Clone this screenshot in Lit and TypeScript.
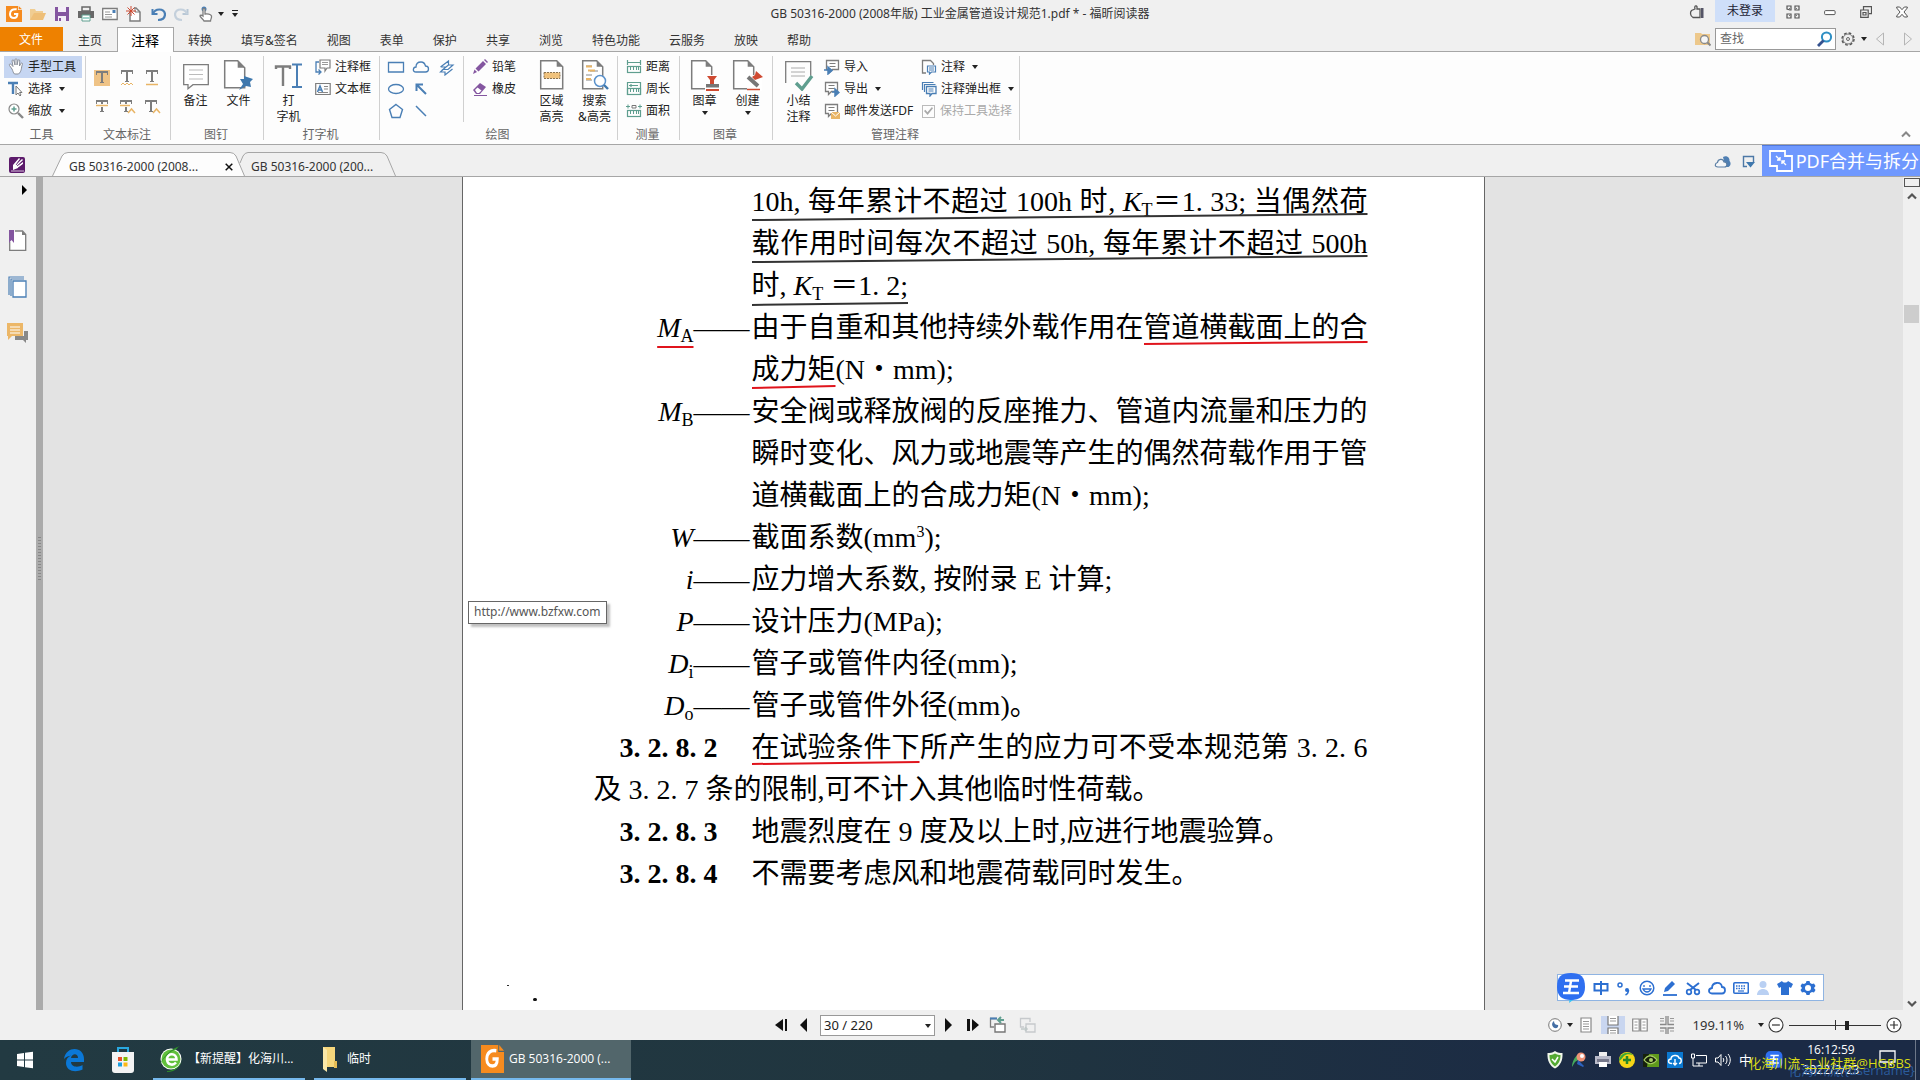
import { LitElement, html, css, svg, nothing, TemplateResult } from "lit";
import { customElement } from "lit/decorators.js";
import { classMap } from "lit/directives/class-map.js";

type Art = ReturnType<typeof svg>;

/* One drawing surface per icon; the view box is in the icon's own pixels. */
const ic = (w: number, h: number, art: Art) =>
  html`<svg class="ic" width=${w} height=${h} viewBox="0 0 ${w} ${h}" fill="none" aria-hidden="true">${art}</svg>`;

const caret = () => ic(6, 4, svg`<path d="M0 0h6L3 4z" fill="#222"/>`);

const G = "#7d7d7d";
const B = "#4a7fb5";
const T = "#5f9e8f";
const P = "#8456a0";
const O = "#e9b566";
const R = "#cf4a32";

const folded = (x: number, y: number, w: number, h: number, c: number) => svg`
  <path d="M${x} ${y}h${w - c}l${c} ${c}v${h - c}h${-w}z" fill="#fff" stroke=${G} stroke-width="1.5"/>
  <path d="M${x + w - c} ${y}v${c}h${c}z" fill=${G}/>`;

const note = (x: number, y: number, w: number, h: number, color = G) => svg`
  <path d="M${x} ${y}h${w}v${h}h${-w / 2}l-3 3v-3h${-(w / 2 - 3)}z" fill="#fff" stroke=${color} stroke-width="1.3"/>
  <path d="M${x + 3} ${y + 3}h${w - 6}M${x + 3} ${y + 6}h${w - 6}" stroke=${color}/>`;

const tee = (x: number, y: number, color = G) => svg`<path d="M${x - 1} ${y + 1}h12M${x + 5} ${y + 1}v11" stroke=${color} stroke-width="2"/><path d="M${x - 0.5} ${y + 1}v3M${x + 10.5} ${y + 1}v3M${x + 3} ${y + 11.5}h4" stroke=${color}/>`;

const foxit = (w: number, h: number) => html`<svg class="ic" width=${w} height=${h} viewBox="0 0 24 24" preserveAspectRatio="none" fill="none" aria-hidden="true">
  <path d="M0 0h18v6h6v18H0z" fill="#f68b1f"/><path d="M19 0l5 5h-5z" fill="#f68b1f"/>
  <path d="M16 5c-6-1-10 2-10 7 0 4 3 6 6 6 4 0 5-3 5-6h-5" stroke="#fff" stroke-width="3"/></svg>`;

const ruler = (top: Art) => ic(16, 16, svg`${top}
  <rect x="1.5" y="7.5" width="13" height="6" stroke=${T} stroke-width="1.2"/><path d="M4.500 8v3M7.500 8v3M10.500 8v3M12.500 8v3" stroke=${T}/>`);

const icons: Record<string, TemplateResult> = {
  open: ic(16, 16, svg`<path d="M0 14V3h5l1 2h7v3" fill="#f0cd92"/><path d="M0 14L4 7h12l-3 7z" fill="#eebf78"/>`),
  save: ic(16, 16, svg`<path d="M1 1h14v14H1z" fill=${P}/><path d="M4 1h8v5H4zM4 10h8v5H4z" fill="#f4eef8"/><path d="M5 12h2v3H5z" fill=${P}/>`),
  print: ic(16, 16, svg`<path d="M4 1h8v4H4z" stroke="#686868" stroke-width="1.500"/><path d="M0 5h16v7H0z" fill="#686868"/><path d="M4 9h8v6H4z" fill="#fff" stroke=${T}/><path d="M5 12h6" stroke="#4a9"/>`),
  mail: ic(16, 14, svg`<path d="M.7 1.500h14.500v11H.7z" fill="#fff" stroke=${G} stroke-width="1.300"/><path d="M3 5h5M3 7.500h7M3 10h7" stroke="#999"/><path d="M10.500 3h3v3h-3z" fill=${B}/>`),
  create: ic(16, 16, svg`<path d="M4 5v10h10V6l-4-4H8" fill="#fff" stroke=${G} stroke-width="1.500"/><path d="M9 2v4h5" stroke=${G}/><path d="M5 0v10M0 5h10M1.500 1.500l7 7M8.500 1.500l-7 7" stroke=${R}/>`),
  undo: ic(16, 16, svg`<path d="M2.500 3v5h5" stroke=${B} stroke-width="2"/><path d="M3 8c2-6 11-6 12 0 0 4-3 6-7 6" stroke=${B} stroke-width="2.200"/>`),
  redo: ic(16, 16, svg`<path d="M13.500 3v5h-5" stroke="#b8c7d5" stroke-width="2"/><path d="M13 8C11 2 2 2 1 8c0 4 3 6 7 6" stroke="#c4d0dc" stroke-width="2.200"/>`),
  touch: ic(16, 16, svg`<circle cx="6" cy="3" r="2.500" fill=${B}/><path d="M5 10V3.500c0-1.500 2-1.500 2 0V8c2-.5 6 0 6.500 2 .3 2-.8 3-1 5H6c-1-2-3-3-4-5 0-1 2-1 3 0z" fill="#fff" stroke=${G} stroke-width="1.300"/>`),
  hand: ic(16, 18, svg`<path d="M4 11L1.500 7.500c-.8-1.500 1-2 2-.8L5 8.500 4 3c0-1.500 1.800-1.500 2 0l1 4V1.800c0-1.400 2-1.400 2 0V7l1-4.500c.3-1.300 2-1 1.800.5L11.500 8l1.300-2.500c.8-1 2-.4 1.600.8C13 10 14 13 10.500 16H6.500C5 14.500 5 13 4 11z" fill="#fff" stroke="#8a8f99"/>`),
  select: ic(16, 16, svg`<path d="M0 2h10M5 2v11" stroke=${B} stroke-width="2.400"/><path d="M8 5v9l2-2 2 3 1-1-1.500-2.500H14z" fill="#fff" stroke="#777"/>`),
  zoom: ic(16, 16, svg`<circle cx="6" cy="6" r="5" fill="#fff" stroke="#888" stroke-width="1.200"/><path d="M6 3.500v5M3.500 6h5" stroke=${T} stroke-width="1.500"/><path d="M10 10l5 5" stroke="#888" stroke-width="2.400"/>`),
  tHigh: ic(18, 18, svg`<path d="M1 1h16v16H1z" fill="#efc386"/>${tee(4, 2)}`),
  tWave: ic(18, 18, svg`${tee(4, 1)}<path d="M3 16l2-2 2 2 2-2 2 2 2-2 2 2" stroke=${O}/>`),
  tUnder: ic(18, 18, svg`${tee(4, 1)}<path d="M3 15.500h12" stroke=${O} stroke-width="1.500"/>`),
  tStrike: ic(18, 18, svg`${tee(4, 3)}<path d="M3 8.500h12" stroke="#fff" stroke-width="3"/><path d="M3 8.500h12" stroke=${O} stroke-width="1.500"/>`),
  tReplace: ic(18, 18, svg`${tee(3, 3)}<path d="M2 8.500h10" stroke="#fff" stroke-width="3"/><path d="M2 8.500h10" stroke=${O} stroke-width="1.500"/><path d="M10 16l3.500-4 3.500 4" stroke=${O} stroke-width="1.500"/>`),
  tInsert: ic(18, 18, svg`${tee(3, 3)}<path d="M10 16l3.500-4 3.500 4" stroke=${O} stroke-width="1.500"/>`),
  noteBig: ic(28, 30, svg`<path d="M1.700 4.700h24.600v20H11l-5 4v-4H1.700z" fill="#fff" stroke=${G} stroke-width="1.300"/><path d="M7 10h14M7 14.500h14M7 19h14" stroke="#bbb"/>`),
  pinBig: ic(32, 32, svg`${folded(1.7, 1.7, 20, 27, 7)}<path d="M21 17l9 3-3 3 1 5-5-1-7 4 4-6-3-5 4 0z" fill="#3f78ad"/>`),
  typeBig: ic(30, 30, svg`<path d="M2 9V6.500h14V9M9 6v20" stroke=${G} stroke-width="2.400"/><path d="M18 4.500h10M18 27h10M23 4.500V27" stroke=${B} stroke-width="2"/>`),
  callout: ic(16, 18, svg`<path d="M5 2h10v8h-3l-2 3v-3H5z" fill="#fff" stroke=${G} stroke-width="1.200"/><path d="M7 4.500h6M7 6.500h6" stroke="#999"/><path d="M4 4H1v10h4M3.500 11.500L6 14l-2.500 2.500" stroke=${B} stroke-width="1.300"/>`),
  textbox: ic(16, 14, svg`<path d="M.7 1.500h14.500v11H.7z" stroke=${G} stroke-width="1.200"/><path d="M2.500 10L5 4l2.500 6M3.500 8h3" stroke=${B} stroke-width="1.500"/><path d="M9 4.500h4M9 7h4M3 10.500h10" stroke="#888"/>`),
  rect: ic(18, 18, svg`<path d="M1.500 4.500h15v9.500h-15z" stroke=${B} stroke-width="1.300"/>`),
  cloud: ic(18, 18, svg`<path d="M4 14C0 14 1 9 4 9c0-3 2-5 5-5s4 2 4.500 4c4 0 4 6 0 6z" stroke=${B} stroke-width="1.300"/>`),
  poly: ic(18, 18, svg`<path d="M3.500 9L11.500 3v4L6 11.500h5L16 7h-5M3.500 9h5M6 11.500L3.500 14h4.500v3l7.500-6" stroke=${B} stroke-width="1.200"/>`),
  oval: ic(18, 18, svg`<ellipse cx="9" cy="9" rx="7.500" ry="4.500" stroke=${B} stroke-width="1.300"/>`),
  arrow: ic(18, 18, svg`<path d="M5 5l9 9M4.500 11V4.500H11" stroke=${B} stroke-width="2"/>`),
  penta: ic(18, 18, svg`<path d="M9 2.500l6.500 5-2.500 8H5l-2.500-8z" stroke=${B} stroke-width="1.400"/>`),
  line: ic(18, 18, svg`<path d="M4 4l10 10" stroke=${B} stroke-width="1.500"/>`),
  pencil: ic(16, 16, svg`<path d="M1 15l1.500-4.500L5 13zM3.500 9.500L11 2l3 3-7.500 7.500z" fill=${P}/><path d="M12 1l1-1 3 3-1 1z" fill=${P}/>`),
  eraser: ic(16, 16, svg`<path d="M1 9l7-7 6 4-6 7H4z" fill=${P}/><path d="M3 9l2.500-2.500 4 3L7 12H5z" fill="#fff"/><path d="M2 14.500h13" stroke=${P}/>`),
  areaBig: ic(26, 32, svg`${folded(1.7, 1.7, 22, 28, 6)}<path d="M5 13.500h16v6H5z" fill="#f0c27c" stroke="#8a7350" stroke-dasharray="2 1"/>`),
  searchBig: ic(30, 32, svg`${folded(2.7, 1.7, 20, 28, 6)}<path d="M6 7h6M10 12h8M6 16h6M6 21h6" stroke="#888"/><path d="M6 7.500h6M8 11.500h7M6 20h5" stroke=${O} stroke-width="2.200"/><circle cx="20" cy="22" r="5.500" fill="#fff" stroke="#5b92cc" stroke-width="1.500"/><path d="M24 26l4 4" stroke="#3f78ad" stroke-width="2.400"/>`),
  dist: ruler(svg`<path d="M1.500 1v5M14.500 1v5M2 3.500h12" stroke=${T} stroke-width="1.200"/>`),
  perim: ruler(svg`<path d="M1.500 14V1.500h13V14M3 4.500h9M5 3v3" stroke=${T} stroke-width="1.200"/>`),
  area: ruler(svg`<path d="M0 3.500h4M2 1.500v4M12 3.500h4M14 1.500v4" stroke=${T}/><path d="M6 2.500h4v2.500H6z" stroke="#777"/>`),
  stampBig: ic(30, 32, svg`${folded(1.7, 1.7, 20, 28, 6)}<path d="M15 16h15v16H15z" fill="#fff"/><path d="M17 17h10l-3 4v4h-4v-4z" fill=${R}/><path d="M16 25h13v3.500H16z" fill="#777"/><path d="M16 31h13" stroke=${R} stroke-width="2"/>`),
  makeBig: ic(32, 32, svg`${folded(1.7, 1.7, 20, 28, 6)}<path d="M15 16h15v16H15z" fill="#fff"/><path d="M24 12l7 6-8 3-3-3 3-2z" fill=${R}/><path d="M16 18l10 9" stroke="#777" stroke-width="4"/><path d="M15 30.500h13" stroke=${R} stroke-width="1.500"/>`),
  sumBig: ic(30, 32, svg`<path d="M1.700 24V2.700h25v14" stroke=${G} stroke-width="1.300"/><path d="M7 9h14M7 13h14M7 17h14" stroke="#aaa"/><path d="M12 24l6 6 10-13" stroke=${T} stroke-width="3.400"/>`),
  impt: ic(16, 16, svg`${note(2.5, 1.5, 12, 9)}<path d="M0 11h5M4 8l4 3.500L4 15z" fill=${B} stroke=${B} stroke-width="1.500"/>`),
  expt: ic(16, 16, svg`${note(1.5, 1.5, 12, 9)}<path d="M8 11h3M11 8l4 3.500-4 3.500z" fill=${B} stroke=${B} stroke-width="1.500"/>`),
  fdf: ic(16, 16, svg`${note(1.5, 1.5, 12, 9)}<path d="M7 9h9v7H7z" fill=${O}/><path d="M7 9l4.500 4L16 9" stroke="#fff"/>`),
  annot: ic(16, 16, svg`<path d="M5 14H1.500V1.500h8l3 3V6" stroke=${G} stroke-width="1.300"/><path d="M6.500 7h8v6h-4l-2 2v-2h-2z" fill="#fff" stroke=${B} stroke-width="1.200"/><path d="M8 9h5M8 11h5" stroke=${B}/>`),
  popup: ic(16, 16, svg`<path d="M1.500 9V1.500h11M3.500 11V3.500h11" stroke=${B} stroke-width="1.200"/><path d="M5.500 5.500h9.500v7h-4l-2 2.500v-2.500H5.500z" fill="#fff" stroke=${B} stroke-width="1.300"/><path d="M7.500 8h5M7.500 10h5" stroke=${B}/>`),
  thumb: ic(16, 16, svg`<path d="M11 5H8V2.500C7 1 5 2 6 5L2.500 6.500C1 8 1 12 4 13.500h7z" stroke="#555" stroke-width="1.300"/><path d="M12 4h2.500v10H12z" fill="#556"/>`),
  grid: ic(14, 14, svg`<path d="M1 4V1h4v4H4zM9 1h4v4H9zM1 9h4v4H1zM9 9h4v4H9z" stroke="#555" stroke-width="1.200"/><path d="M5 5l-2-2M9 5l2-2M5 9l-2 2M9 9l2 2" stroke="#777"/>`),
  min: ic(12, 12, svg`<rect x=".6" y="4.600" width="10.500" height="4" rx="1" fill="#fff" stroke="#555"/>`),
  restore: ic(12, 12, svg`<path d="M3.500 4V.7h8v7H9M.7 4h7.500v7.300H.7zM3 6.500h3v2.500H3z" stroke="#555" stroke-width="1.200"/>`),
  close: ic(12, 12, svg`<path d="M.7 1h3L6 3.700 8.300 1h3v1L8 6l3.300 4v1h-3L6 8.300 3.700 11h-3v-1L4 6 .7 2z" fill="#fff" stroke="#555"/>`),
  findFolder: ic(16, 16, svg`<path d="M0 2h6l1 1h8v11H0z" fill="#edc88b"/><circle cx="9.500" cy="8.500" r="4" fill="#f6f6f6" stroke="#888" stroke-width="1.300"/><path d="M12.500 11.500l3 3" stroke="#888" stroke-width="2"/>`),
  lens: ic(16, 16, svg`<circle cx="9.500" cy="6" r="4.600" stroke="#2e8fc4" stroke-width="2"/><path d="M6.500 9.500L1 15" stroke="#35528f" stroke-width="2.800"/>`),
  gear: ic(16, 16, svg`<circle cx="8" cy="8" r="6" stroke="#555" stroke-width="1.500" stroke-dasharray="2.700 2"/><circle cx="8" cy="8" r="5" stroke="#777"/><circle cx="8" cy="8" r="1.500" stroke="#666"/>`),
  prev: ic(10, 14, svg`<path d="M8.500 1v12L1.500 7z" stroke="#b5b5b5"/>`),
  next: ic(10, 14, svg`<path d="M1.500 1v12l7-6z" stroke="#b5b5b5"/>`),
  chevUp: ic(12, 8, svg`<path d="M2 6.500l4-4 4 4" stroke="#888" stroke-width="2"/>`),
  up: ic(12, 8, svg`<path d="M2 6.500l4-4 4 4" stroke="#555" stroke-width="2.200"/>`),
  down: ic(12, 8, svg`<path d="M2 1.500l4 4 4-4" stroke="#555" stroke-width="2.200"/>`),
  pen: ic(16, 16, svg`<rect width="16" height="16" rx="2" fill="#5c1a6b"/><path d="M4 13V8l6-7 1 1-4 5 6-5 1 1-6 6 6-4v2l-5 4z" fill="#fff"/><path d="M7 8l5-6M8 9l6-5M9 11l6-4" stroke="#5c1a6b" stroke-width=".8"/><path d="M2 14h13" stroke="#d9c3df"/>`),
  cloudDoc: ic(18, 14, svg`<path d="M9 2c4-2 7 1 6.500 4 2 2 1 5-1 6h-3" fill="#4f7fb3"/><path d="M4 12C0 12 1 8 3.500 7.500 4 4 9 3 10 7c4 0 3.500 5 .5 5z" fill="#f4f6f8" stroke="#5b7fa5" stroke-width="1.200"/>`),
  pageDown: ic(14, 14, svg`<path d="M5 11.500H1.500v-10h10V7" stroke="#4c78a6" stroke-width="1.400"/><path d="M4 7h9l-4.500 5.500z" fill="#3f78ad"/>`),
  merge: ic(24, 22, svg`<path d="M1 1h15v5h7v15H8v-5H1z" stroke="#fff" stroke-width="1.800"/><path d="M7 6l4 4M11 7v3H8M17 15l-4-4M13 14v-3h3" stroke="#fff" stroke-width="1.400"/>`),
  bookmark: ic(20, 22, svg`<path d="M1.700 12v8.300h16V4.500L14.500 1H7" fill="#fff" stroke=${G} stroke-width="1.300"/><path d="M14 1v4h4z" fill=${G}/><path d="M1 0h5v13l-2.500-3L1 13z" fill=${P}/>`),
  pages: ic(20, 22, svg`<path d="M1 19V1h15M3 20V3h13" stroke=${B} stroke-width="1.200"/><path d="M5 5h13v16H5z" fill="#fff" stroke=${B} stroke-width="1.300"/>`),
  comments: ic(22, 22, svg`<path d="M17 9h4v9h-2v3l-3-3H8v-4h9z" fill="#888"/><path d="M0 1h16v13H5l-4 4v-4H0z" fill="#ecb768"/><path d="M3 5h10M3 8h10M3 11h10" stroke="#fff"/>`),
  first: ic(13, 14, svg`<path d="M8 1v12L0 7z" fill="#111"/><path d="M10 1h2v12h-2zM8.500 3v8" fill="#111"/>`),
  back: ic(8, 14, svg`<path d="M7 0v14L0 7z" fill="#111"/>`),
  fwd: ic(8, 14, svg`<path d="M1 0v14l7-7z" fill="#111"/>`),
  last: ic(13, 14, svg`<path d="M0 1h3v12H0zM5 1v12l7-6z" fill="#111"/>`),
  viewBack: ic(18, 18, svg`<path d="M5 11H1.500V2.500H8" stroke=${G} stroke-width="1.300"/><path d="M1 2.500h7" stroke=${B} stroke-width="2"/><path d="M6 8h10v8H6z" fill="#fff" stroke="#777" stroke-width="1.400"/><path d="M9 4h6M12 1L9 4l3 3" stroke=${T} stroke-width="2"/>`),
  viewFwd: ic(18, 18, svg`<path d="M11 6V2.500H1.500V11H5M7 8h9v8H7z" stroke="#c6c9cc" stroke-width="1.300"/><path d="M2 13h6M6 11l2 2-2 2" stroke="#c0c8c8" stroke-width="1.500"/>`),
  moon: ic(16, 14, svg`<circle cx="8" cy="7" r="6.300" fill="#fff" stroke="#777"/><path d="M7 3c-4 3-1 8 3 7 1-1 1.500-2 1-3-2 0-4-1-4-4z" fill="#456fa5"/>`),
  single: ic(12, 16, svg`<path d="M1 1h10v14H1z" fill="#fff" stroke="#888" stroke-width="1.200"/><path d="M3 4.500h6M3 7h6M3 9.500h6M3 12h6" stroke="#999"/>`),
  cont: ic(12, 18, svg`<path d="M1 0v9h10V0M1 18v-6h10v6" fill="#fff" stroke="#777" stroke-width="1.200"/><path d="M3 2.500h6M3 5h6M3 14.500h6M3 17h6" stroke="#999"/>`),
  facing: ic(16, 16, svg`<path d="M.7 2h6.500v12H.7zM8.700 2h6.500v12H8.700z" fill="#fff" stroke="#888" stroke-width="1.200"/><path d="M2.500 5h3M2.500 8h3M2.500 11h3M10.500 5h3M10.500 8h3M10.500 11h3" stroke="#999"/>`),
  facingCont: ic(16, 18, svg`<path d="M7 0v8.500H1M9 0v8.500h6M7 18v-6H1M9 18v-6h6" stroke="#888" stroke-width="1.300"/><path d="M1 2.500h4M1 5h4M11 2.500h4M11 5h4M1 15h4M11 15h4" stroke="#999"/>`),
  minus: ic(16, 16, svg`<circle cx="8" cy="8" r="7" fill="#fff" stroke="#333" stroke-width="1.100"/><path d="M4 8h8" stroke="#333" stroke-width="1.200"/>`),
  plus: ic(16, 16, svg`<circle cx="8" cy="8" r="7" fill="#fff" stroke="#333" stroke-width="1.100"/><path d="M4 8h8M8 4v8" stroke="#333" stroke-width="1.200"/>`),
  win: ic(16, 18, svg`<path d="M0 3l7-1v6.500H0zM8 1.800L16 .7v7.800H8zM0 9.500h7V16l-7-1zM8 9.500h8v7.800l-8-1.100z" fill="#fff"/>`),
  edge: ic(22, 24, svg`<path d="M1 11C2 4 7 1 11.500 1 17 1 21 5 21 11v3H8c0 5 7 6 11.500 3v4.500C12 25 3 23 3 15c0-4 2-6 5-7.500C6 8 3 8.500 1 11zM8 10h7c0-5-6-5-7 0z" fill="#0b78d7"/>`),
  store: ic(24, 28, svg`<path d="M7 7V2h10v5" stroke="#29a9e0" stroke-width="2"/><path d="M1 6h22v18c0 2-1 3-3 3H4c-2 0-3-1-3-3z" fill="#f3f3f3"/><path d="M7 11h4v4H7z" fill="#e8502a"/><path d="M12.500 11h4v4h-4z" fill="#7fba00"/><path d="M7 16.500h4v4H7z" fill="#1b9ee0"/><path d="M12.500 16.500h4v4h-4z" fill="#fdb813"/>`),
  browser: ic(24, 28, svg`<circle cx="12" cy="14" r="10.500" fill="#fff"/><circle cx="12" cy="14" r="9.500" fill="#62c03c"/><path d="M7.500 14.500h10c0-7-9-7-9.500-.5 0 6 6 7 9 3.500" stroke="#fff" stroke-width="2.600"/><path d="M1 20C2 14 12 3 21 1c-2 1-3 2-3 3C11 6 4 13 1 20zM8 26c7 0 14-5 15-12-1 7-6 13-15 13z" fill="#2f8f2b"/>`),
  folder: ic(16, 28, svg`<path d="M1 2h12v20H1z" fill="#f6d77c"/><path d="M1 2l4 3v22l-4-3z" fill="#fbe8a8"/><path d="M12 16h3v7h-3z" fill="#e6bd55"/>`),
  shield: ic(16, 18, svg`<path d="M8 0c3 2 5 2 7.500 2C16 10 13 15 8 17.500 3 15 0 10 .5 2 3 2 5 2 8 0z" fill="#f1f7ea"/><path d="M8 2.500c2 1.300 4 1.500 5.500 1.500 0 6-2 9-5.500 11.500C4.500 13 2.500 10 2.500 4 4 4 6 3.800 8 2.500z" fill="#55aa33"/><path d="M5 8l3 3 3-5" stroke="#fff" stroke-width="1.500"/>`),
  satellite: ic(16, 16, svg`<path d="M1 15c0-5 3-12 8-13l-2 6-3 2z" fill="#45aa5c"/><circle cx="10" cy="5" r="4.500" fill="#ef9377"/><circle cx="11" cy="4" r="2" fill="#fff"/><path d="M7 8l6 6-1 1-6-3z" fill="#2c62c0"/>`),
  printer: ic(16, 16, svg`<path d="M4 0h8v5H4z" fill="#eee"/><path d="M0 4h16v8H0z" fill="#b8bac9"/><path d="M2 7h12v3H2z" fill="#77798c"/><path d="M4 10h8v5H4z" fill="#fff"/>`),
  plusBall: ic(16, 16, svg`<circle cx="8" cy="8" r="8" fill="#f6d516"/><path d="M0 9C0 2 9-2 14 3c-4-1-7-1-9 1-2 2-3 4-5 5z" fill="#39a935"/><path d="M8 4v8M4 8h8" stroke="#25882a" stroke-width="2.500"/>`),
  nvidia: ic(16, 16, svg`<path d="M0 2h16v13H0z" fill="#16210b"/><path d="M6 2h10v13H4z" fill="#5f9a1c"/><path d="M1 8c4-6 9-5 13 0-4 5-9 5-13 0z" fill="#16210b" stroke="#a9cf66" stroke-width="1.200"/><circle cx="8" cy="8" r="2" fill="#a9cf66"/>`),
  cloudDown: ic(16, 16, svg`<path d="M0 0h16v16H0z" fill="#0b78d0"/><path d="M5 11.500C0 11.500 1 7 4 7c0-4 7-5 8-1 3 0 3 5.500 0 5.500" stroke="#fff" stroke-width="1.400"/><path d="M8 7v6M6 11l2 2 2-2" stroke="#fff" stroke-width="1.400"/>`),
  net: ic(16, 16, svg`<path d="M5 3.500h10.500v7.500H5M8 11v3M5 14h7M.5 2h3v4h-3zM2 6v8h3" stroke="#fff"/>`),
  sound: ic(16, 16, svg`<path d="M.5 6h2.500l3-3.500v11L3 10H.5zM8 6c1 1 1 3 0 4M10.500 4c2 2 2 6 0 8M13 2c3 3.500 3 8.500 0 12" stroke="#fff"/>`),
  action: ic(18, 18, svg`<path d="M1 2h15v11h-4v3l-3-3H1z" stroke="#fff" stroke-width="1.300"/>`),
  wang: ic(28, 30, svg`<path d="M13 24h7l-8 6z" fill="#37c2f5"/><path d="M14 0C24 0 28 4 28 14c0 9-5 13-14 13S0 23 0 14C0 4 4 0 14 0z" fill="#2f6ff0"/><path d="M8 7.500h14M7 13.500h14M6 20h16M14 8l-2 12" stroke="#fff" stroke-width="2.400"/>`),
  zhong: ic(16, 16, svg`<path d="M1.500 4h13v6.500h-13zM8 1v14" stroke="#2c6fd1" stroke-width="2"/>`),
  punct: ic(16, 16, svg`<circle cx="4" cy="5" r="2" stroke="#2c6fd1" stroke-width="1.500"/><circle cx="11" cy="10" r="2" fill="#2c6fd1"/><path d="M12.500 10c0 3-1 4-3 5" stroke="#2c6fd1" stroke-width="1.500"/>`),
  smile: ic(16, 16, svg`<circle cx="8" cy="8" r="6.800" stroke="#2c6fd1" stroke-width="1.500"/><path d="M5 5v2M11 5v2M4 9c2 4 6 4 8 0z" stroke="#2c6fd1" stroke-width="1.300"/>`),
  write: ic(16, 16, svg`<path d="M1 15h14" stroke="#2c6fd1" stroke-width="1.800"/><path d="M2 12l1-4 7-7 3 3-7 7z" fill="#2c6fd1"/>`),
  cut: ic(16, 16, svg`<circle cx="4" cy="12" r="2.300" stroke="#2c6fd1" stroke-width="1.700"/><circle cx="12" cy="12" r="2.300" stroke="#2c6fd1" stroke-width="1.700"/><path d="M2 3l9 7M14 3l-9 7" stroke="#2c6fd1" stroke-width="2"/>`),
  skyCloud: ic(18, 16, svg`<path d="M4 13.500C0 13.500 0 8.500 4 8c0-6 9-7 10-1 4 0 4 6.500 0 6.500z" stroke="#2c6fd1" stroke-width="1.800"/>`),
  keys: ic(16, 16, svg`<rect x=".8" y="2.800" width="14.500" height="10.500" rx="1" stroke="#2c6fd1" stroke-width="1.600"/><path d="M3 6h10M3 8.500h10" stroke="#2c6fd1" stroke-width="1.500" stroke-dasharray="1.500 1"/><path d="M5 11h6" stroke="#2c6fd1" stroke-width="1.200"/>`),
  user: ic(14, 16, svg`<circle cx="7" cy="4.500" r="3.500" fill="#b9d0f3"/><path d="M1 15c0-8 12-8 12 0z" fill="#b9d0f3"/>`),
  shirt: ic(16, 16, svg`<path d="M5 1c1 2 5 2 6 0l5 3-2 4-2-1v8H4V7L2 8 0 4z" fill="#2c6fd1"/>`),
  cog: ic(16, 16, svg`<path d="M6.500 1h3l.6 2 1.900 1 2-.5 1.500 2.600L14 8l1.500 1.900L14 12.500l-2-.5-1.900 1-.6 2h-3l-.6-2L4 12l-2 .5L.5 9.900 2 8 .5 6.100 2 3.500 4 4l1.900-1zM8 5a3 3 0 100 6 3 3 0 000-6z" fill="#2c6fd1" fill-rule="evenodd"/>`),
};

const tabs = ["主页", "注释", "转换", "填写&签名", "视图", "表单", "保护", "共享", "浏览", "特色功能", "云服务", "放映", "帮助"];

const row = (icon: string, text: string, opts: { menu?: boolean; on?: boolean } = {}) => html`
  <button class=${classMap({ row: true, on: !!opts.on })}>${icons[icon]}<span>${text}</span>${opts.menu ? html`<i class="menu">${caret()}</i>` : nothing}</button>`;

const big = (icon: string, lines: string[], menu = false) => html`
  <button class="big"><span class="pic">${icons[icon]}</span>${lines.map((l) => html`<span>${l}</span>`)}${menu ? caret() : nothing}</button>`;

const tiny = (icon: string, label: string) => html`<button class="tiny" aria-label=${label}>${icons[icon]}</button>`;

const group = (cls: string, label: string, body: unknown) => html`
  <section class="group ${cls}" aria-label=${label}><div class="gbody">${body}</div><div class="glabel">${label}</div></section>`;

const def = (sym: unknown, body: unknown, full = false) => html`
  <div class="term">${sym}<span class="dash">——</span></div><div class=${classMap({ text: true, full })}>${body}</div>`;
const more = (body: unknown, full = false) => html`<div></div><div class=${classMap({ text: true, full })}>${body}</div>`;
const clause = (no: string, body: unknown, full = false) => html`
  <div class="no">${no}</div><div class=${classMap({ text: true, full })}>${body}</div>`;

@customElement("app-root")
export class AppRoot extends LitElement {
  static styles = css`
    :host { display: flex; flex-direction: column; height: 100vh; overflow: hidden; background: #f0f0f0; color: #333;
      font: 12px/16px "Noto Sans", "Noto Sans CJK SC", sans-serif; }
    * { box-sizing: border-box; }
    button, input, select { font: inherit; color: inherit; background: none; border: 0; padding: 0; margin: 0; }
    button { display: flex; align-items: center; justify-content: center; white-space: nowrap; }
    .ic { display: block; flex: none; }

    .title { display: grid; grid-template-columns: 1fr auto 1fr; height: 27px; align-items: center; flex: none; }
    .qat { display: flex; gap: 8px; padding-left: 6px; align-items: center; }
    .qat .carets { display: flex; align-items: center; gap: 8px; margin-left: -4px; }
    .name { font-size: 12px; padding-top: 1px; }
    .winbtns { display: flex; justify-content: flex-end; align-items: flex-start; gap: 24px; padding-right: 12px; height: 27px; }
    .winbtns button { height: 24px; }
    .winbtns .pair { display: flex; gap: 10px; }
    .winbtns .login { background: #cfdff9; width: 60px; height: 22px; color: #223; }
    .winbtns .grid { margin-left: -13px; }

    .tabrow { display: flex; height: 25px; flex: none; border-bottom: 1px solid #a6a6a6; }
    .tab { padding: 2px 15px 0 14px; height: 25px; }
    .tab.file { background: #ee8100; color: #fff; width: 63px; margin-right: 1px; height: 24px; }
    .tab.active { background: #fff; border: 1px solid #a6a6a6; border-bottom: 0; font-size: 14px; color: #000; padding: 2px 14px 0 13px; }
    .find { margin-left: auto; display: flex; align-items: center; padding-right: 7px; gap: 4px; }
    .box { display: flex; align-items: center; background: #fff; border: 1px solid #999; width: 121px; height: 22px; padding: 0 2px 0 4px; }
    .box input { flex: 1; min-width: 0; outline: 0; }
    .box input::placeholder { color: #666; }
    .find .set { gap: 5px; margin-right: 4px; }
    .find .nx { margin-left: 14px; }

    .ribbon { display: flex; height: 93px; flex: none; background: #fdfdfd; border-bottom: 1px solid #a6a6a6; color: #222; }
    .group { display: flex; flex-direction: column; position: relative; padding-top: 4px; flex: none; }
    .group::after { content: ""; position: absolute; right: 0; top: 4px; bottom: 4px; width: 1px; background: #d0d0d0; }
    .gbody { display: flex; height: 71px; align-items: flex-start; }
    .glabel { text-align: center; color: #666; padding-right: 3px; }
    .col { display: flex; flex-direction: column; align-items: flex-start; flex: none; }
    .row { height: 22px; gap: 4px; padding-right: 6px; }
    .row.on { background: #c6d6f2; margin-left: -4px; padding-left: 4px; }
    .row .menu { margin-left: 3px; }
    .big { flex: none; flex-direction: column; justify-content: flex-start; width: 43px; }
    .pic { height: 37px; display: flex; align-items: center; }
    .big > .ic { margin-top: 2px; }
    .tiny { width: 25px; height: 22px; }
    .g-tool { width: 86px; } .g-tool .gbody { padding-left: 8px; }
    .g-mark { width: 85px; } .g-mark .grid3 { padding: 11px 0 0 3px; }
    .grid3 { display: grid; grid-template-columns: repeat(3, 25px); }
    .g-mark .grid3 { row-gap: 6px; }
    .g-pin { width: 93px; } .g-pin .gbody { padding-left: 3px; }
    .g-type { width: 116px; } .g-type .gbody { padding-left: 3px; } .g-type .col { padding-left: 5px; }
    .g-draw { width: 238px; } .g-draw .gbody { padding-left: 3px; }
    .g-draw .col { border-left: 1px solid #d0d0d0; margin: 0 4px 0 5px; padding-left: 8px; height: 66px; width: 63px; }
    .g-meas { width: 62px; } .g-meas .gbody { padding-left: 8px; }
    .g-stamp { width: 93px; } .g-stamp .gbody { padding-left: 3px; }
    .g-man { width: 247px; } .g-man .gbody { padding-left: 4px; } .g-man .col { width: 97px; padding-left: 4px; }
    .keep { display: flex; align-items: center; height: 22px; gap: 5px; color: #aaa; padding-left: 1px; white-space: nowrap; }
    .keep input { appearance: none; width: 13px; height: 13px; border: 1px solid #bbb; display: grid; place-items: center; }
    .keep input::after { content: ""; width: 9px; height: 8px; background: #aaa; clip-path: polygon(0 50%, 15% 35%, 38% 65%, 88% 0, 100% 15%, 40% 100%); }
    .fold { margin: auto 8px 6px auto; }

    .docs { display: flex; height: 32px; flex: none; border-bottom: 1px solid #a6a6a6; align-items: flex-end; color: #333; }
    .docs .pen { margin: 0 0 3px 9px; align-self: flex-end; height: 16px; }
    .dtab { position: relative; height: 24px; width: 193px; margin-left: 27px; display: flex; align-items: center; padding: 5px 12px 0 17px; }
    .dtab + .dtab { margin-left: -6px; width: 157px; padding-left: 12px; }
    .dtab svg.edge { position: absolute; left: 0; top: 0; width: 100%; height: 100%; }
    .dtab a { position: relative; flex: 1; color: inherit; text-decoration: none; white-space: nowrap; }
    .dtab button { position: relative; height: 16px; }
    .dright { margin-left: auto; display: flex; align-items: center; gap: 11px; }
    .dright .tools { display: flex; gap: 10px; padding-top: 2px; margin-right: -5px; }
    .banner { background: #6f98fe; border-top: 1px solid #4f78de; color: #fff; font-size: 18px; height: 31px; gap: 3px; padding: 0 1px 0 7px; }

    .main { flex: 1; display: flex; min-height: 0; }
    .side { width: 36px; display: flex; flex-direction: column; align-items: center; padding-top: 7px; flex: none; }
    .side .exp { margin: 0 0 34px 14px; height: 12px; }
    .side .nav { margin-bottom: 24px; height: 22px; }
    .split { width: 7px; background: #ababab; flex: none; display: flex; align-items: center; justify-content: center; }
    .split i { width: 3px; height: 44px; margin-bottom: 70px; background: repeating-linear-gradient(#888 0 1px, transparent 1px 3px); }
    .view { flex: 1; min-width: 0; background: #e3e3e3; overflow: hidden; position: relative; }
    .page { width: 55%; height: 100%; margin: 0 auto; background: #fff; border: solid #666; border-width: 0 1px; overflow: hidden; position: relative;
      padding: 4px 0 0 131px; color: #000; font: 400 28px/42px "Liberation Serif", "Noto Sans CJK SC", serif; }
    .lines { display: grid; grid-template-columns: 158px 616px; grid-auto-rows: 42px; white-space: nowrap; }
    .term { text-align: right; padding-right: 2px; }
    .term sub, .text sub { font-size: 18px; line-height: 0; font-style: normal; vertical-align: -5px; }
    .text sup { font-size: 16px; line-height: 0; vertical-align: 10px; }
    .no { font-weight: 700; padding-left: 26px; }
    .full { text-align: justify; text-align-last: justify; }
    .wide { grid-column: 1 / -1; }
    .u { position: relative; display: inline-block; height: 42px; text-align-last: auto; }
    .u::after { content: ""; position: absolute; left: 0; right: 0; top: 32px; height: 8px; background: #333; clip-path: polygon(0 6px, 100% 0, 100% 2px, 0 8px); }
    .u.all { width: 100%; text-align-last: justify; }
    .u.flat::after { top: 34px; clip-path: polygon(0 5px, 100% 3px, 100% 5px, 0 7px); }
    .u.red::after { background: #e0141c; left: 0; top: 33px; clip-path: polygon(0 3px, 100% 1px, 100% 3px, 0 5px); }
    .u.low::after { top: 35px; }
    .u.sym::after { top: 38px; clip-path: polygon(0 1px, 100% 1px, 100% 3px, 0 3px); }
    .speck { position: absolute; border-radius: 2px; background: #111; width: 4px; height: 3px; left: 70px; bottom: 9px; }
    .speck.two { width: 2px; height: 1px; left: 44px; bottom: 24px; }
    .tip { position: absolute; left: 425px; top: 424px; border: 1px solid #666; background: #fff; color: #555; padding: 1px 6px 2px 5px; box-shadow: 3px 3px 2px #8888; font-size: 12px; line-height: 18px; }
    .scroll { width: 17px; flex: none; display: flex; flex-direction: column; align-items: center; padding: 1px 0 2px; }
    .scroll .cap { width: 16px; height: 9px; border: 1px solid #555; margin-bottom: 5px; }
    .scroll button { height: 8px; }
    .scroll .thumb { width: 15px; height: 18px; background: #cdcdcd; margin: 105px 0 auto; }

    .status { height: 30px; flex: none; display: grid; grid-template-columns: 1fr auto 1fr; align-items: center; }
    .pager { display: flex; align-items: center; gap: 12px; grid-column: 2; margin-left: -108px; }
    .pager .sel { position: relative; display: flex; align-items: center; margin: 0 -3px 0 0; }
    .pager select { appearance: none; width: 115px; height: 21px; border: 1px solid #999; background: #fff; padding-left: 3px; font-size: 13px; color: #222; }
    .pager .sel .ic { position: absolute; right: 4px; top: 9px; }
    .pager .end { margin: 0 -3px 0 3px; }
    .zoomer { display: flex; align-items: center; justify-content: flex-end; padding-right: 18px; gap: 3px; }
    .zoomer .mode { width: 24px; height: 20px; }
    .zoomer .mode.on { background: #c9d6f0; height: 18px; }
    .zoomer .eye { gap: 4px; margin-right: -2px; }
    .pct { display: flex; align-items: center; gap: 14px; font-size: 13px; margin: 0 1px 0 11px; }
    .zoomer input { appearance: none; width: 92px; height: 16px; margin: 0 2px;
      background: linear-gradient(#333, #333) 50% 3px / 1px 10px no-repeat, linear-gradient(#333, #333) 0 8px / 100% 1px no-repeat; }
    .zoomer input::-webkit-slider-thumb { appearance: none; width: 4px; height: 9px; background: #222; }

    .ime { position: absolute; right: 79px; bottom: 9px; height: 27px; display: flex; align-items: center; gap: 7px; background: #fff; border: 1px solid #8fb4e2; padding: 0 7px 0 0; }
    .ime .logo { margin: 0 1px 0 -1px; }

    .bar { height: 40px; flex: none; display: flex; align-items: stretch; background: linear-gradient(90deg, #223a42, #20353f 50%, #1b2a45 85%); color: #fff; font-family: "Open Sans", "Noto Sans CJK SC", sans-serif; }
    .bar .pinned { width: 49px; }
    .bar .shop { width: 50px; margin-right: 5px; }
    .task { justify-content: flex-start; width: 152px; margin-right: 9px; padding-left: 6px; gap: 5px; border-bottom: 2px solid #76b9ed; }
    .task.active { background: #52666b; width: 160px; padding-left: 10px; gap: 5px; margin-left: -4px; }
    .task.dir { padding-left: 8px; gap: 9px; }
    .tray { margin-left: auto; display: flex; align-items: center; gap: 8px; position: relative; }
    .tray .lang { font-size: 13px; width: 18px; }
    .tray .mini { width: 18px; height: 18px; }
    .clock { width: 80px; text-align: center; line-height: 20px; }
    .clock time { display: block; }
    .tray .act { margin: 0 10px 4px 0; }
    .tray .desk { border-left: 1px solid #6d7789; width: 5px; height: 40px; }
    .mark { position: absolute; right: 9px; top: 13px; font-size: 13px; color: #d9dc16; white-space: nowrap; line-height: 20px; }
    .mark.blue { color: #2b5c9c; right: 5px; top: 20px; }
  `;

  render() {
    return html`
      <header class="title">
        <div class="qat">
          ${foxit(16, 16)}
          ${[["open", "打开"], ["save", "保存"], ["print", "打印"], ["mail", "邮件"], ["create", "新建"], ["undo", "撤销"], ["redo", "重做"], ["touch", "触摸模式"]].map(
            ([i, l]) => html`<button aria-label=${l}>${icons[i]}</button>`)}
          <span class="carets">${caret()}${ic(6, 8, svg`<path d="M0 0h6v1H0zM0 3h6L3 7z" fill="#222"/>`)}</span>
        </div>
        <div class="name">GB 50316-2000 (2008年版) 工业金属管道设计规范1.pdf * - 福昕阅读器</div>
        <div class="winbtns">
          <span class="pair"><button aria-label="点赞">${icons.thumb}</button><button class="login">未登录</button></span>
          <button class="grid" aria-label="全屏">${icons.grid}</button>
          <button aria-label="最小化">${icons.min}</button>
          <button aria-label="还原">${icons.restore}</button>
          <button aria-label="关闭">${icons.close}</button>
        </div>
      </header>
      <nav class="tabrow">
        <button class="tab file">文件</button>
        ${tabs.map((t) => html`<button class=${classMap({ tab: true, active: t === "注释" })}>${t}</button>`)}
        <div class="find">
          <button aria-label="高级查找">${icons.findFolder}</button>
          <label class="box"><input type="text" placeholder="查找" aria-label="查找" />${icons.lens}</label>
          <button class="set" aria-label="设置">${icons.gear}${caret()}</button>
          <button aria-label="上一个">${icons.prev}</button>
          <button class="nx" aria-label="下一个">${icons.next}</button>
        </div>
      </nav>
      <div class="ribbon">
        ${group("g-tool", "工具", html`<div class="col">${row("hand", "手型工具", { on: true })}${row("select", "选择", { menu: true })}${row("zoom", "缩放", { menu: true })}</div>`)}
        ${group("g-mark", "文本标注", html`<div class="grid3">${[["tHigh", "高亮"], ["tWave", "波浪线"], ["tUnder", "下划线"], ["tStrike", "删除线"], ["tReplace", "替换"], ["tInsert", "插入"]].map(([i, l]) => tiny(i, l))}</div>`)}
        ${group("g-pin", "图钉", html`${big("noteBig", ["备注"])}${big("pinBig", ["文件"])}`)}
        ${group("g-type", "打字机", html`${big("typeBig", ["打", "字机"])}<div class="col">${row("callout", "注释框")}${row("textbox", "文本框")}</div>`)}
        ${group("g-draw", "绘图", html`
          <div class="grid3">${[["rect", "矩形"], ["cloud", "云形"], ["poly", "折线"], ["oval", "椭圆"], ["arrow", "箭头"]].map(([i, l]) => tiny(i, l))}<span></span>${tiny("penta", "多边形")}${tiny("line", "直线")}</div>
          <div class="col">${row("pencil", "铅笔")}${row("eraser", "橡皮")}</div>
          ${big("areaBig", ["区域", "高亮"])}${big("searchBig", ["搜索", "&高亮"])}`)}
        ${group("g-meas", "测量", html`<div class="col">${row("dist", "距离")}${row("perim", "周长")}${row("area", "面积")}</div>`)}
        ${group("g-stamp", "图章", html`${big("stampBig", ["图章"], true)}${big("makeBig", ["创建"], true)}`)}
        ${group("g-man", "管理注释", html`${big("sumBig", ["小结", "注释"])}
          <div class="col">${row("impt", "导入")}${row("expt", "导出", { menu: true })}${row("fdf", "邮件发送FDF")}</div>
          <div class="col">${row("annot", "注释", { menu: true })}${row("popup", "注释弹出框", { menu: true })}
            <label class="keep"><input type="checkbox" checked disabled />保持工具选择</label></div>`)}
        <button class="fold" aria-label="折叠功能区">${icons.chevUp}</button>
      </div>
      <div class="docs">
        <span class="pen">${icons.pen}</span>
        <div class="dtab">
          <svg class="edge" viewBox="0 0 193 24" preserveAspectRatio="none" aria-hidden="true"><path d="M.5 24L10 4Q12 .5 16 .5H178Q182 .5 184 4L192.500 24" fill="#fdfdfd" stroke="#a6a6a6"/></svg>
          <a href="#doc1">GB 50316-2000 (2008...</a>
          <button aria-label="关闭标签">${ic(8, 8, svg`<path d="M.7.7l6.600 6.600M7.300.7L.7 7.300" stroke="#111" stroke-width="1.500"/>`)}</button>
        </div>
        <div class="dtab">
          <svg class="edge" viewBox="0 0 157 24" preserveAspectRatio="none" aria-hidden="true"><path d="M1 11L4 4Q6 .5 9 .5H142Q146 .5 148 4L156.500 24" stroke="#a6a6a6" fill="none"/></svg>
          <a href="#doc2">GB 50316-2000 (200...</a>
        </div>
        <div class="dright">
          <span class="tools"><button aria-label="云端">${icons.cloudDoc}</button><button aria-label="标签列表">${icons.pageDown}</button></span>
          <button class="banner">${icons.merge}<span>PDF合并与拆分</span></button>
        </div>
      </div>
      <main class="main">
        <nav class="side">
          <button class="exp" aria-label="展开">${ic(6, 10, svg`<path d="M0 0l5 5-5 5z" fill="#000"/>`)}</button>
          <button class="nav" aria-label="书签">${icons.bookmark}</button>
          <button class="nav" aria-label="页面">${icons.pages}</button>
          <button class="nav" aria-label="注释列表">${icons.comments}</button>
        </nav>
        <div class="split"><i></i></div>
        <div class="view">
          <article class="page">
            <div class="lines">
              ${more(html`<span class="u all">10h, 每年累计不超过 100h 时, <em>K</em><sub>T</sub>＝1. 33; 当偶然荷</span>`)}
              ${more(html`<span class="u all">载作用时间每次不超过 50h, 每年累计不超过 500h</span>`)}
              ${more(html`<span class="u flat">时, <em>K</em><sub>T</sub> ＝1. 2;</span>`)}
              ${def(html`<span class="u red sym"><em>M</em><sub>A</sub></span>`, html`由于自重和其他持续外载作用在<span class="u red">管道横截面上的合</span>`)}
              ${more(html`<span class="u red low">成力矩</span>(N・mm);`)}
              ${def(html`<em>M</em><sub>B</sub>`, html`安全阀或释放阀的反座推力、管道内流量和压力的`)}
              ${more(html`瞬时变化、风力或地震等产生的偶然荷载作用于管`)}
              ${more(html`道横截面上的合成力矩(N・mm);`)}
              ${def(html`<em>W</em>`, html`截面系数(mm<sup>3</sup>);`)}
              ${def(html`<em>i</em>`, html`应力增大系数, 按附录 E 计算;`)}
              ${def(html`<em>P</em>`, html`设计压力(MPa);`)}
              ${def(html`<em>D</em><sub>i</sub>`, html`管子或管件内径(mm);`)}
              ${def(html`<em>D</em><sub>o</sub>`, html`管子或管件外径(mm)。`)}
              ${clause("3. 2. 8. 2", html`<span class="u red">在试验条件下</span>所产生的应力可不受本规范第 3. 2. 6`, true)}
              <div class="wide">及 3. 2. 7 条的限制,可不计入其他临时性荷载。</div>
              ${clause("3. 2. 8. 3", html`地震烈度在 9 度及以上时,应进行地震验算。`)}
              ${clause("3. 2. 8. 4", html`不需要考虑风和地震荷载同时发生。`)}
            </div>
            <i class="speck"></i><i class="speck two"></i>
          </article>
          <div class="tip">http://www.bzfxw.com</div>
          <div class="ime">
            <span class="logo">${icons.wang}</span>
            ${[["zhong", "中文"], ["punct", "标点"], ["smile", "表情"], ["write", "手写"], ["cut", "截图"], ["skyCloud", "云"], ["keys", "键盘"], ["user", "用户"], ["shirt", "皮肤"], ["cog", "设置"]].map(
              ([i, l]) => html`<button aria-label=${l}>${icons[i]}</button>`)}
          </div>
        </div>
        <div class="scroll">
          <span class="cap"></span>
          <button aria-label="向上">${icons.up}</button>
          <span class="thumb"></span>
          <button aria-label="向下">${icons.down}</button>
        </div>
      </main>
      <footer class="status">
        <div class="pager">
          <button aria-label="首页">${icons.first}</button>
          <button aria-label="上一页">${icons.back}</button>
          <span class="sel"><select aria-label="页码"><option>30 / 220</option></select>${caret()}</span>
          <button aria-label="下一页">${icons.fwd}</button>
          <button class="end" aria-label="末页">${icons.last}</button>
          <button aria-label="后退视图">${icons.viewBack}</button>
          <button aria-label="前进视图">${icons.viewFwd}</button>
        </div>
        <div class="zoomer">
          <button class="eye" aria-label="阅读模式">${icons.moon}${caret()}</button>
          <button class="mode" aria-label="单页">${icons.single}</button>
          <button class="mode on" aria-label="连续">${icons.cont}</button>
          <button class="mode" aria-label="双页">${icons.facing}</button>
          <button class="mode" aria-label="双页连续">${icons.facingCont}</button>
          <button class="pct"><span>199.11%</span>${caret()}</button>
          <button aria-label="缩小">${icons.minus}</button>
          <input type="range" min="0" max="100" value="64" aria-label="缩放比例" />
          <button aria-label="放大">${icons.plus}</button>
        </div>
      </footer>
      <footer class="bar">
        <button class="pinned" aria-label="开始">${icons.win}</button>
        <button class="pinned" aria-label="Edge">${icons.edge}</button>
        <button class="shop" aria-label="应用商店">${icons.store}</button>
        <button class="task">${icons.browser}<span>【新提醒】化海川...</span></button>
        <button class="task dir">${icons.folder}<span>临时</span></button>
        <button class="task active">${foxit(23, 28)}<span>GB 50316-2000 (...</span></button>
        <div class="tray">
          ${["shield", "satellite", "printer", "plusBall", "nvidia", "cloudDown", "net", "sound"].map((i) => icons[i])}
          <span class="lang">中</span>
          <svg class="ic mini" viewBox="0 0 28 30" aria-hidden="true"><rect width="28" height="28" rx="8" fill="#2f6ff0"/><path d="M8 7.500h14M7 13.500h14M6 20h16M14 8l-2 12" stroke="#fff" stroke-width="2.600"/></svg>
          <div class="clock"><time>16:12:59</time><time>2022/2/23</time></div>
          <button class="act" aria-label="通知">${icons.action}</button>
          <span class="desk"></span>
          <span class="mark blue">化海川流({username}</span>
          <span class="mark">化海川流-工业社群@HGBBS</span>
        </div>
      </footer>
    `;
  }
}
